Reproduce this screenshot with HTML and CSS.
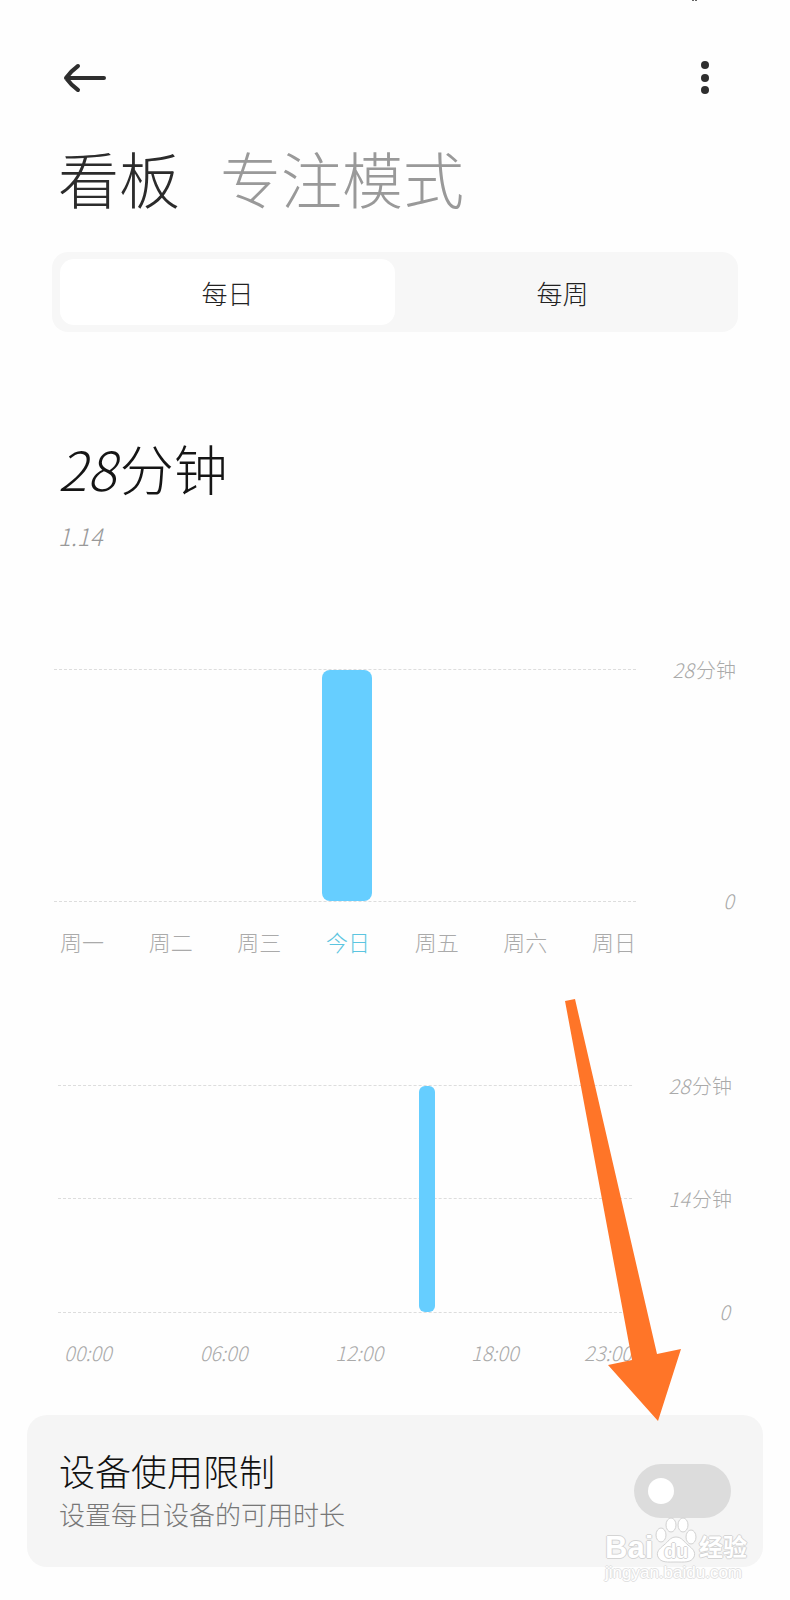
FILE: index.html
```
<!DOCTYPE html>
<html lang="zh-CN">

<head>
    <meta charset="UTF-8">
    <meta name="viewport" content="width=device-width, initial-scale=1.0">
    <title>看板</title>
    <link rel="stylesheet" href="styles.css">
</head>

<body>
    <header class="topbar">
        <button class="icon-btn" type="button" aria-label="返回">
            <svg width="44" height="32" viewBox="0 0 44 32" fill="none" stroke="#2e2e2e" stroke-width="4" stroke-linecap="round" stroke-linejoin="round">
                <path d="M42 16H4M16 4Q9 9 4 16q5 7 12 12" />
            </svg>
        </button>
        <button class="icon-btn" type="button" aria-label="更多">
            <svg width="10" height="34" viewBox="0 0 10 34" fill="#2e2e2e">
                <circle cx="5" cy="4" r="4" />
                <circle cx="5" cy="17" r="4" />
                <circle cx="5" cy="29" r="4" />
            </svg>
        </button>
        <svg class="status-mark" width="6" height="2" viewBox="0 0 6 2" fill="#666">
            <path d="M0 0h2v1H0zM3 0h2v1H3z" />
        </svg>
    </header>

    <main>
        <nav class="tabs">
            <a class="active" href="#board">看板</a>
            <a href="#focus">专注模式</a>
        </nav>

        <div class="segment">
            <button class="selected" type="button">每日</button>
            <button type="button">每周</button>
        </div>

        <section class="summary">
            <h1><i>28</i>分钟</h1>
            <p><i>1.14</i></p>
        </section>

        <!-- usage per day of the week -->
        <section class="chart week">
            <div class="plot">
                <div class="bar"></div>
            </div>
            <div class="scale">
                <span><i>28</i>分钟</span>
                <span><i>0</i></span>
            </div>
            <div class="days">
                <span>周一</span>
                <span>周二</span>
                <span>周三</span>
                <span class="today">今日</span>
                <span>周五</span>
                <span>周六</span>
                <span>周日</span>
            </div>
        </section>

        <!-- usage per hour of the day -->
        <section class="chart hours">
            <div class="plot">
                <div class="line"></div>
                <div class="bar"></div>
            </div>
            <div class="scale">
                <span><i>28</i>分钟</span>
                <span><i>14</i>分钟</span>
                <span><i>0</i></span>
            </div>
            <div class="times">
                <i>00:00</i>
                <i>06:00</i>
                <i>12:00</i>
                <i>18:00</i>
                <i>23:00</i>
            </div>
        </section>
    </main>

    <section class="limit">
        <label for="limit-switch">
            <span class="limit-title">设备使用限制</span>
            <span class="limit-text">设置每日设备的可用时长</span>
        </label>
        <input class="switch" type="checkbox" role="switch" id="limit-switch">

        <svg class="pointer" width="116" height="422" viewBox="0 0 116 422" fill="#ff7528">
            <path d="M0 2L10 0L92 355L116 350L93 422L43 366L67 361Z" />
        </svg>

        <div class="watermark">
            <div class="brand">
                <span class="latin">Bai</span>
                <span class="paw">
                    <svg width="42" height="46" viewBox="0 0 42 46" fill="#fff" stroke="#d2d2d2">
                        <ellipse cx="6" cy="18" rx="5" ry="7" />
                        <ellipse cx="16" cy="8" rx="5" ry="7" />
                        <ellipse cx="28" cy="8" rx="5" ry="7" />
                        <ellipse cx="36" cy="20" rx="5" ry="7" />
                        <path d="M21 20c-6 0-8 5-12 8c-5 4-8 7-6 12c3 6 10 5 18 5s15 1 18-5c2-5-1-8-6-12c-4-3-6-8-12-8z" />
                    </svg>
                    <b>du</b>
                </span>
                <span class="cjk">经验</span>
            </div>
            <div class="site">jingyan.baidu.com</div>
        </div>
    </section>
</body>

</html>
```

FILE: styles.css
```
* {
    box-sizing: border-box;
}

body {
    margin: 0;
    background: #fefefe;
    color: #222;
    font-family: "Noto Sans CJK SC", sans-serif;
    font-weight: 300;
}

button {
    border: none;
    background: none;
    padding: 0;
    font: inherit;
    color: inherit;
    cursor: pointer;
}

.topbar {
    position: relative;
    display: flex;
    justify-content: space-between;
    align-items: center;
    padding: 61px 80px 0 62px;
}

.icon-btn {
    display: flex;
}

.icon-btn svg {
    display: block;
}

.status-mark {
    position: absolute;
    top: 0;
    right: 92px;
}

main {
    padding: 0 54px;
}

.tabs {
    display: flex;
    gap: 40px;
    margin-top: 47px;
    padding-left: 4px;
    font-size: 61px;
    line-height: 72px;
}

.tabs a {
    color: #999;
    text-decoration: none;
}

.tabs .active {
    color: #2b2b2b;
}

.segment {
    display: grid;
    grid-template-columns: 1fr 1fr;
    margin: 38px -2px 0;
    padding: 7px 8px;
    border-radius: 16px;
    background: #f7f7f7;
}

.segment button {
    height: 66px;
    border-radius: 14px;
    font-size: 26px;
}

.segment .selected {
    background: #fff;
}

.summary {
    margin-top: 102px;
    padding-left: 4px;
}

.summary h1 {
    margin: 0;
    color: #151515;
    font-size: 54px;
    font-weight: 300;
    line-height: 68px;
}

.summary h1 i {
    margin-right: 4px;
}

.summary p {
    margin: 18px 0 0;
    color: #999;
    font-size: 24px;
    line-height: 32px;
}

.chart {
    display: grid;
    grid-template-columns: 1fr 100px;
    color: #aaa;
    font-size: 20px;
    line-height: 24px;
}

.plot {
    display: grid;
    border: 1px dashed #ddd;
    border-width: 1px 0;
}

.bar {
    background: #66ceff;
}

.scale {
    display: flex;
    flex-direction: column;
    justify-content: space-between;
    margin: -11px 0;
    text-align: right;
}

.scale i {
    margin-right: 2px;
}

.week {
    margin-top: 117px;
}

.week .plot {
    height: 233px;
    grid-template-columns: 1fr;
}

.week .bar {
    width: 50px;
    margin-left: 4px;
    justify-self: center;
    border-radius: 8px;
}

.days {
    display: flex;
    justify-content: space-between;
    margin-top: 27px;
    padding-left: 6px;
    font-size: 22px;
}

.days .today {
    color: #5cc5e0;
}

.hours {
    margin-top: 132px;
    padding: 0 4px;
}

.hours .plot {
    height: 228px;
    grid-template-columns: 361px 16px 1fr;
    grid-template-rows: 1fr 1fr;
}

.hours .line {
    grid-column: 1 / -1;
    grid-row: 1;
    border-bottom: 1px dashed #ddd;
}

.hours .bar {
    grid-column: 2;
    grid-row: 1 / -1;
    border-radius: 6px;
}

.times {
    display: grid;
    grid-template-columns: 6fr 6fr 6fr 5fr 48px;
    margin-top: 28px;
    padding-left: 6px;
}

.limit {
    position: relative;
    display: flex;
    justify-content: space-between;
    align-items: center;
    margin: 50px 27px 32px;
    padding: 32px;
    border-radius: 20px;
    background: #f5f5f5;
}

.limit label {
    display: flex;
    flex-direction: column;
}

.limit-title {
    color: #111;
    font-size: 36px;
    line-height: 46px;
}

.limit-text {
    color: #777;
    font-size: 26px;
    line-height: 42px;
}

.switch {
    appearance: none;
    width: 97px;
    height: 54px;
    margin: 0;
    padding: 14px;
    border-radius: 27px;
    background: #dcdcdc;
}

.switch::before {
    content: "";
    display: block;
    width: 26px;
    height: 26px;
    border-radius: 50%;
    background: #fff;
}

.switch:checked {
    background: #66ceff;
}

.switch:checked::before {
    margin-left: auto;
}

.pointer {
    position: absolute;
    right: 82px;
    bottom: 146px;
}

.watermark {
    position: absolute;
    right: 16px;
    bottom: -16px;
    width: 142px;
    color: #fff;
    font-family: "Liberation Sans", "Noto Sans CJK SC", sans-serif;
    text-shadow: 1px 0 #d4d4d4, -1px 0 #d4d4d4, 0 1px #d4d4d4, 0 -1px #d4d4d4;
    pointer-events: none;
}

.brand {
    display: flex;
    justify-content: space-between;
    align-items: flex-end;
    font-weight: bold;
    line-height: 30px;
}

.latin {
    font-size: 31px;
}

.paw {
    position: relative;
}

.paw svg {
    display: block;
}

.paw b {
    position: absolute;
    left: 0;
    right: 0;
    bottom: 0;
    font-size: 20px;
    line-height: 24px;
    text-align: center;
}

.cjk {
    font-size: 24px;
}

.site {
    font-size: 17px;
    line-height: 20px;
    text-shadow: 1px 0 #e2e2e2, -1px 0 #e2e2e2, 0 1px #e2e2e2, 0 -1px #e2e2e2;
}
```
